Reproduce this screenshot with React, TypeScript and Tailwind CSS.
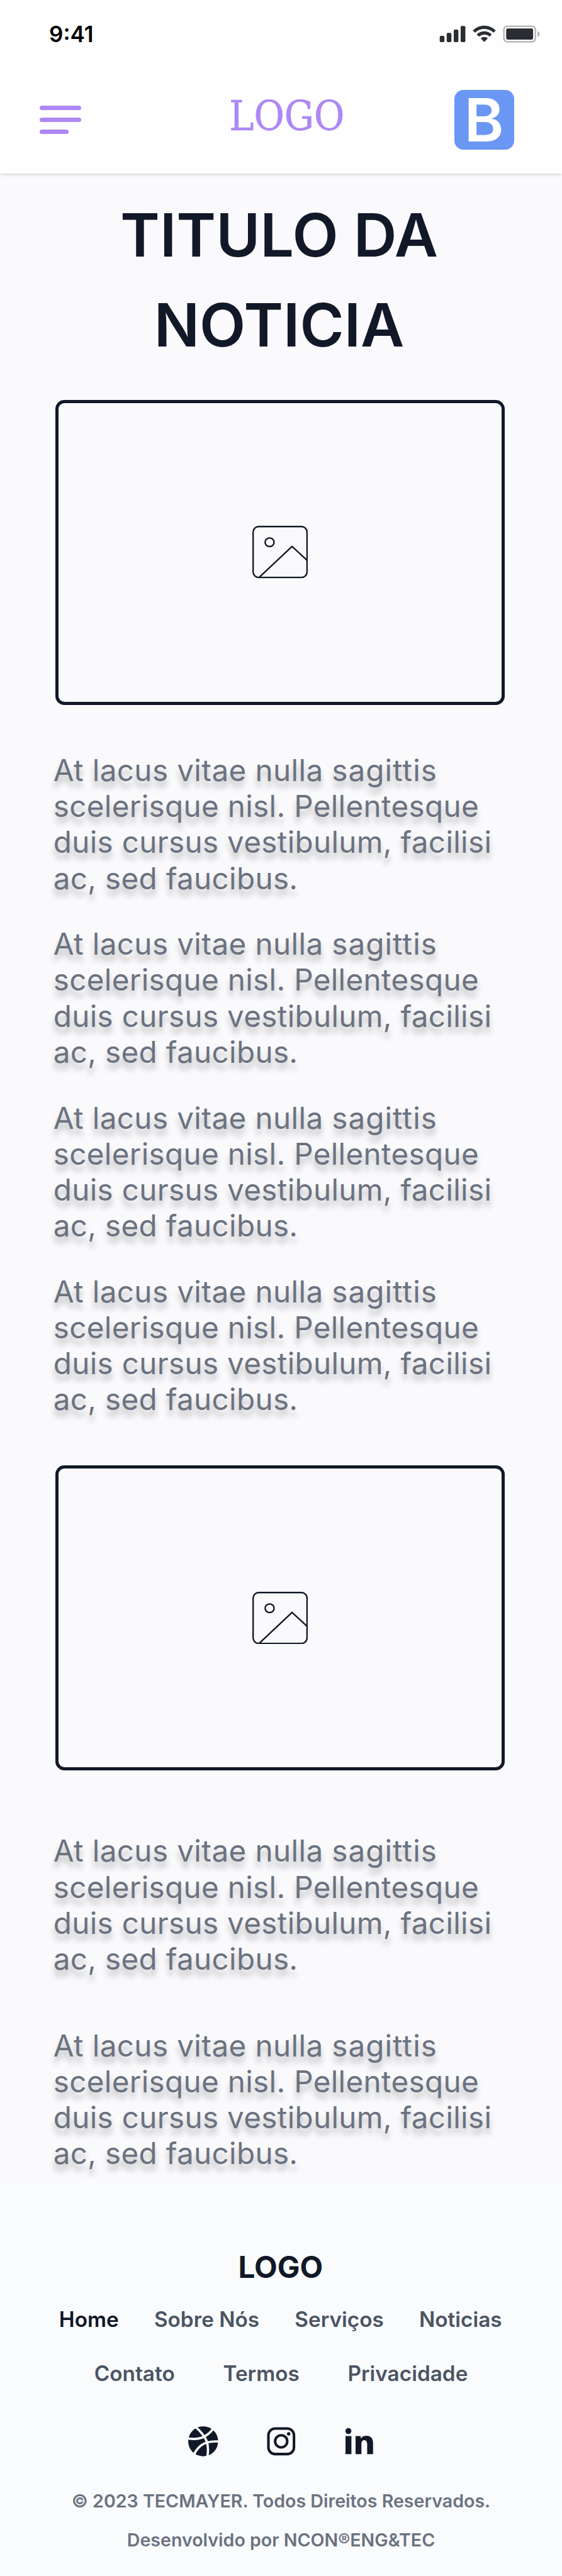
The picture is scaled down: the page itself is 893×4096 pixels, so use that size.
function Paragraph() {
  return (
    <p className="-ml-[3.4px] flex flex-col whitespace-nowrap text-[47.63px] leading-[57.15px] tracking-[0.32px] text-[#6b7280] [text-shadow:0_9.5px_9.5px_rgba(0,0,0,0.25)]">
      <span className="tracking-[0.38px]">
        At lacus vitae nulla <span className="tracking-[1.05px]">sagittis</span>
      </span>
      <span>scelerisque nisl. Pellentesque</span>
      <span>duis cursus vestibulum, facilisi</span>
      <span>ac, sed faucibus.</span>
    </p>
  );
}

function Placeholder() {
  return (
    <div className="flex h-[485px] w-[714.3px] items-center justify-center rounded-[14.3px] border-[5px] border-[#111827]">
      <svg className="h-[83.4px] w-[88.1px] text-[#111827]" viewBox="0 0 148 140" fill="none" stroke="currentColor" strokeWidth="4">
        <rect x="2" y="2" width="144" height="136" rx="15" />
        <ellipse cx="46" cy="44" rx="12" ry="11.4" />
        <path d="M18 138 L106 55 L146 92" />
      </svg>
    </div>
  );
}

function StatusIcons() {
  return (
    <svg className="h-[32.7px] w-[166.7px]" viewBox="1170 65 280 55" fill="#2a2d32">
      <rect x="1174.3" y="97" width="12.6" height="17" rx="3.5" />
      <rect x="1193" y="89" width="12.6" height="25" rx="3.5" />
      <rect x="1211.8" y="80" width="12.4" height="34" rx="3.5" />
      <rect x="1230.3" y="70.3" width="12.6" height="43.7" rx="3.5" />
      <path d="M1262.7 82.7 A43 43 0 0 1 1324.2 82.7 L1318 88.5 A35 35 0 0 0 1269 88.5 Z" />
      <path d="M1273 93 A29.5 29.5 0 0 1 1313.5 93 L1307.5 99.2 A20.5 20.5 0 0 0 1279.5 99.2 Z" />
      <path d="M1284 103.5 A14.5 14.5 0 0 1 1303 103.5 L1293.4 113.4 Z" />
      <rect x="1346" y="71.3" width="84" height="41.7" rx="9" fill="none" stroke="#b5b6b8" strokeWidth="4" />
      <rect x="1352" y="77" width="72" height="30" rx="4" />
      <path d="M1436 84 C1443 87 1443 97 1436 100 Z" fill="#a9aaad" />
    </svg>
  );
}

function Dribbble() {
  return (
    <svg className="size-[47.63px]" viewBox="0 0 80 80" fill="none" stroke="#f9fbfd" strokeWidth="6.2">
      <circle cx="40" cy="40" r="40" fill="#111827" stroke="none" />
      <path d="M19 1 C34 14 44 27 49 39 C54 52 54 66 51 82" />
      <path d="M-1 32.5 C24 37 48 32 67 6" />
      <path d="M15 76 C30 45 52 39 82 40.5" />
    </svg>
  );
}

function InstagramIcon() {
  return (
    <svg className="size-[47.63px]" viewBox="0 0 80 80" fill="none" stroke="#111827" strokeWidth="6.8">
      <rect x="5.9" y="5.9" width="68.2" height="68.2" rx="18" />
      <circle cx="40" cy="40" r="16.2" />
      <circle cx="60" cy="20" r="4.6" fill="#111827" stroke="none" />
    </svg>
  );
}

function LinkedIn() {
  return (
    <svg className="size-[47.63px]" viewBox="-3 -5 80 80" fill="#111827">
      <circle cx="8.1" cy="7.7" r="8" />
      <rect x="0.4" y="21" width="15.7" height="48.3" />
      <path d="M27.2 21 H40.6 L41 27.5 C44 22.5 50 20 56 20 C68 20 73.9 27.5 73.9 39 V69.3 H58.2 V43 C58.2 36 55.5 32 50.5 32 C45.5 32 42.8 36 42.8 43 V69.3 H27.2 Z" />
    </svg>
  );
}

export default function App() {
  return (
    <div className="flex h-[4096px] w-[893px] flex-col overflow-hidden bg-[#fafafc] font-['Inter',sans-serif]">
      <header className="h-[276.3px] shrink-0 bg-[#fefefe] shadow-[0_2.4px_5px_rgba(0,0,0,0.16)]">
        <div className="flex h-[108px] items-center justify-between pl-[78px] pr-[30px]">
          <span className="text-[35px] font-semibold text-black">9:41</span>
          <StatusIcons />
        </div>
        <div className="flex h-[165px] items-center justify-between pl-[63.1px] pr-[76.2px]">
          <div className="flex flex-col gap-[11.9px]">
            <div className="h-[7.15px] w-[66px] rounded-full bg-[#ad88f5]" />
            <div className="h-[7.15px] w-[66px] rounded-full bg-[#ad88f5]" />
            <div className="h-[7.15px] w-[46px] rounded-full bg-[#ad88f5]" />
          </div>
          <span className="ml-[61px] pb-[14px] font-['DejaVu_Serif_Condensed','DejaVu_Serif',serif] text-[65.6px] leading-[80px] text-[#ad88f5] [-webkit-text-stroke:0.6px_#ad88f5]">
            LOGO
          </span>
          <div className="flex size-[95.25px] items-center justify-center rounded-[14.3px] bg-[#6b97f4] text-[95.25px] font-semibold leading-[95.25px] text-white">
            B
          </div>
        </div>
      </header>
      <h1 className="mt-[27px] pr-[6px] text-center text-[95.25px] font-semibold leading-[142.9px] text-[#111827]">
        TITULO DA
        <br />
        NOTICIA
      </h1>
      <main className="flex flex-col items-start pl-[88.1px] pt-[46.4px]">
        <Placeholder />
        <div className="flex flex-col gap-[47.6px] pb-[76.6px] pt-[75.6px]">
          <Paragraph />
          <Paragraph />
          <Paragraph />
          <Paragraph />
        </div>
        <Placeholder />
        <div className="flex flex-col gap-[81px] pt-[99.4px]">
          <Paragraph />
          <Paragraph />
        </div>
      </main>
      <footer className="mt-3 flex grow flex-col items-center bg-[#f9fbfd] pt-[111.2px]">
        <span className="pr-[1.5px] text-[47.63px] font-bold leading-[57.2px] text-[#111827]">LOGO</span>
        <nav className="mt-[26.9px] flex flex-col items-center gap-[28.8px] text-[33.34px] font-semibold leading-[57.2px] text-[#4b5563]">
          <div className="flex gap-[56.2px] pr-[1.5px]">
            <a className="text-[#111827]">Home</a>
            <a>Sobre Nós</a>
            <a>Serviços</a>
            <a>Noticias</a>
          </div>
          <div className="flex gap-[76.8px]">
            <a>Contato</a>
            <a>Termos</a>
            <a>Privacidade</a>
          </div>
        </nav>
        <div className="mt-[55px] flex gap-[76.2px]">
          <Dribbble />
          <InstagramIcon />
          <LinkedIn />
        </div>
        <div className="mt-[49px] flex flex-col items-center gap-[18.8px] text-[28.58px] font-semibold leading-[43px] text-[#6b7280]">
          <p>© 2023 TECMAYER. Todos Direitos Reservados.</p>
          <p>Desenvolvido por NCON®ENG&amp;TEC</p>
        </div>
      </footer>
    </div>
  );
}
